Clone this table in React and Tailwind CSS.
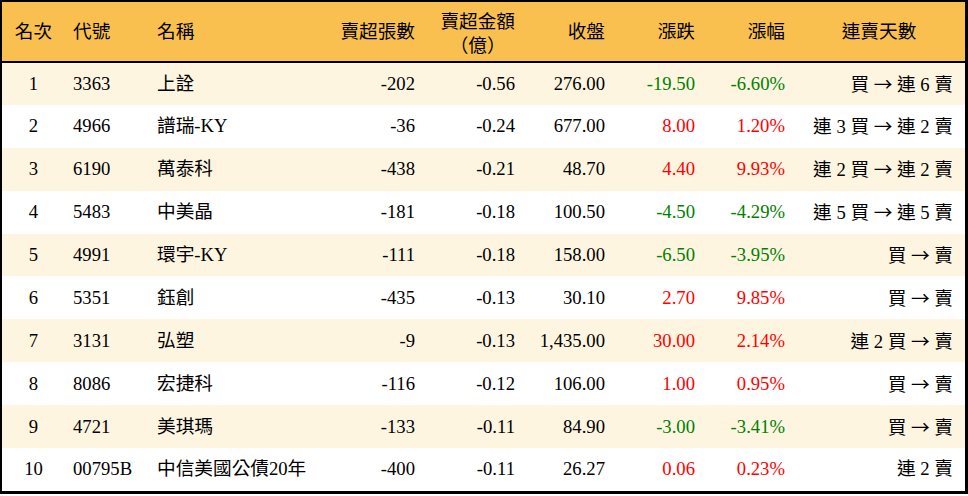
const rows = [
  { rank: 1, code: '3363', name: '上詮', vol: '-202', amt: '-0.56', close: '276.00', chg: '-19.50', pct: '-6.60%', streak: '買 → 連 6 賣' },
  { rank: 2, code: '4966', name: '譜瑞-KY', vol: '-36', amt: '-0.24', close: '677.00', chg: '8.00', pct: '1.20%', streak: '連 3 買 → 連 2 賣' },
  { rank: 3, code: '6190', name: '萬泰科', vol: '-438', amt: '-0.21', close: '48.70', chg: '4.40', pct: '9.93%', streak: '連 2 買 → 連 2 賣' },
  { rank: 4, code: '5483', name: '中美晶', vol: '-181', amt: '-0.18', close: '100.50', chg: '-4.50', pct: '-4.29%', streak: '連 5 買 → 連 5 賣' },
  { rank: 5, code: '4991', name: '環宇-KY', vol: '-111', amt: '-0.18', close: '158.00', chg: '-6.50', pct: '-3.95%', streak: '買 → 賣' },
  { rank: 6, code: '5351', name: '鈺創', vol: '-435', amt: '-0.13', close: '30.10', chg: '2.70', pct: '9.85%', streak: '買 → 賣' },
  { rank: 7, code: '3131', name: '弘塑', vol: '-9', amt: '-0.13', close: '1,435.00', chg: '30.00', pct: '2.14%', streak: '連 2 買 → 賣' },
  { rank: 8, code: '8086', name: '宏捷科', vol: '-116', amt: '-0.12', close: '106.00', chg: '1.00', pct: '0.95%', streak: '買 → 賣' },
  { rank: 9, code: '4721', name: '美琪瑪', vol: '-133', amt: '-0.11', close: '84.90', chg: '-3.00', pct: '-3.41%', streak: '買 → 賣' },
  { rank: 10, code: '00795B', name: '中信美國公債20年', vol: '-400', amt: '-0.11', close: '26.27', chg: '0.06', pct: '0.23%', streak: '連 2 賣' },
];

// arrow drawn with the CJK font so it is full width, like the original
function Streak({ text }) {
  const parts = text.split('→');
  return (
    <>
      {parts.map((p, i) => (
        <span key={i}>
          {i > 0 && <span className="font-['Noto_Sans_CJK_TC']">→</span>}
          {p}
        </span>
      ))}
    </>
  );
}

export default function App() {
  return (
    <div className="w-[968px] h-[496px] bg-white font-['Liberation_Serif','Noto_Sans_CJK_TC',serif] text-[18.67px] text-black">
      <div className="border-t-2 border-l-2 border-r-[3px] border-b-[3px] border-black">
        <table className="w-full table-fixed border-collapse">
          <colgroup>
            <col className="w-[59px]" />
            <col className="w-[84px]" />
            <col className="w-[155px]" />
            <col className="w-[127px]" />
            <col className="w-[100px]" />
            <col className="w-[90px]" />
            <col className="w-[90px]" />
            <col className="w-[90px]" />
            <col />
          </colgroup>
          <thead>
            <tr className="h-[60px] bg-[#f9c04f] border-b-2 border-black">
              <th className="font-normal text-center pl-1">名次</th>
              <th className="font-normal text-left px-3">代號</th>
              <th className="font-normal text-left px-3">名稱</th>
              <th className="font-normal text-right px-3">賣超張數</th>
              <th className="font-normal text-right px-3">
                <div className="flex flex-col items-center ml-auto w-fit leading-[22px] pt-0.5">
                  <span>賣超金額</span>
                  <span className="font-['Noto_Sans_CJK_TC']">（億）</span>
                </div>
              </th>
              <th className="font-normal text-right px-3">收盤</th>
              <th className="font-normal text-right px-3">漲跌</th>
              <th className="font-normal text-right px-3">漲幅</th>
              <th className="font-normal text-center pr-1">連賣天數</th>
            </tr>
          </thead>
          <tbody>
            {rows.map((r, i) => {
              const color = r.chg.startsWith('-') ? 'text-[#008000]' : 'text-[#ff0000]';
              return (
                <tr key={r.rank} className={`h-[42.9px] ${i % 2 === 0 ? 'bg-[#fef5e1]' : 'bg-white'}`}>
                  <td className="text-center pl-1">{r.rank}</td>
                  <td className="text-left px-3">{r.code}</td>
                  <td className="text-left px-3 whitespace-nowrap">{r.name}</td>
                  <td className="text-right px-3">{r.vol}</td>
                  <td className="text-right px-3">{r.amt}</td>
                  <td className="text-right px-3">{r.close}</td>
                  <td className={`text-right px-3 ${color}`}>{r.chg}</td>
                  <td className={`text-right px-3 ${color}`}>{r.pct}</td>
                  <td className="text-right px-3 whitespace-nowrap">
                    <Streak text={r.streak} />
                  </td>
                </tr>
              );
            })}
          </tbody>
        </table>
      </div>
    </div>
  );
}
